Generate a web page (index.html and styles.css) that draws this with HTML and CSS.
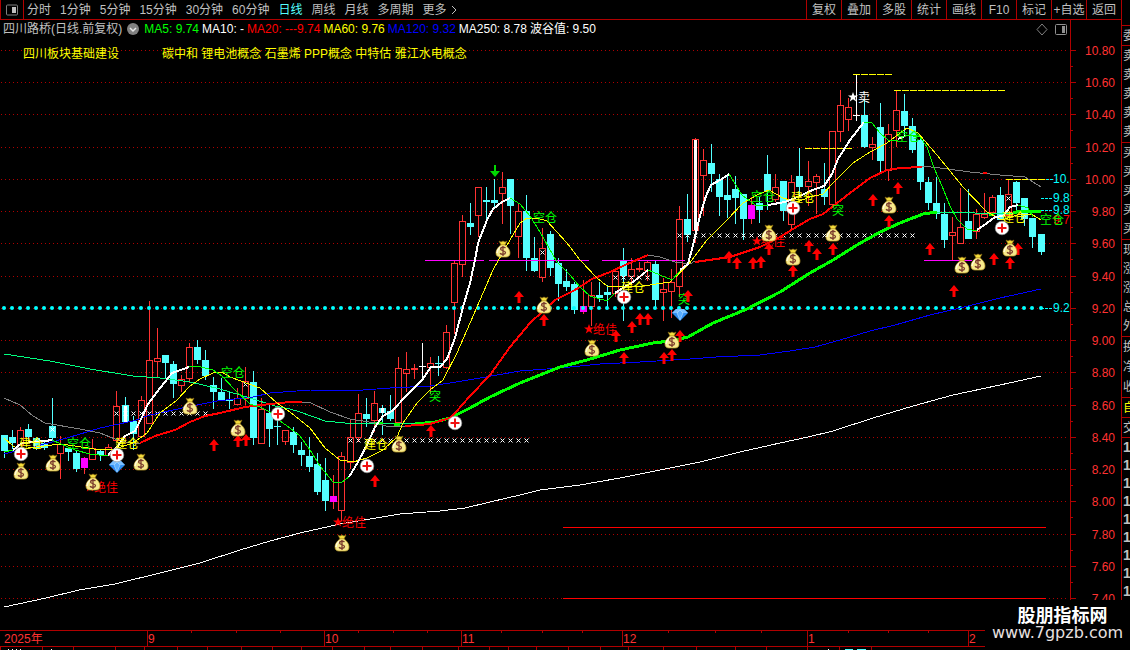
FILE: index.html
```
<!DOCTYPE html>
<html lang="zh-CN">
<head>
    <meta charset="UTF-8">
    <meta name="viewport" content="width=device-width, initial-scale=1.0">
    <title>四川路桥 日线</title>
    <link rel="stylesheet" href="styles.css">
</head>
<body>
    <div class="terminal">
        <main class="main">
            <header class="toolbar">
                <button type="button" class="panel-btn" aria-label="侧栏">
                    <svg width="14" height="12" viewBox="0 0 14 12">
                        <rect x="1.5" y="1" width="11" height="10" rx="1" fill="none" stroke="#808080"/>
                        <rect x="7" y="3" width="4" height="6" fill="#c0c0c0"/>
                    </svg>
                </button>
                <nav class="periods">
                    <button type="button">分时</button>
                    <button type="button">1分钟</button>
                    <button type="button">5分钟</button>
                    <button type="button">15分钟</button>
                    <button type="button">30分钟</button>
                    <button type="button">60分钟</button>
                    <button type="button" class="active">日线</button>
                    <button type="button">周线</button>
                    <button type="button">月线</button>
                    <button type="button">多周期</button>
                    <button type="button" class="more">更多
                        <svg width="6" height="10" viewBox="0 0 6 10"><path d="M1 1l4 4-4 4" fill="none" stroke="#c0c0c0"/></svg>
                    </button>
                </nav>
                <div class="tools">
                    <button type="button">复权</button>
                    <button type="button">叠加</button>
                    <button type="button">多股</button>
                    <button type="button">统计</button>
                    <button type="button">画线</button>
                    <button type="button">F10</button>
                    <button type="button">标记</button>
                    <button type="button">+自选</button>
                    <button type="button">返回</button>
                </div>
            </header>

            <section class="chart-wrap">
                <svg id="chart" class="chart" viewBox="0 20 1121 630"></svg>

                <div class="legend">
                    <div class="legend-row">
                        <span class="stock">四川路桥(日线.前复权)</span>
                        <svg width="12" height="12" viewBox="0 0 12 12">
                            <circle cx="6" cy="6" r="6" fill="#808080"/>
                            <path d="M3 5l3 3 3-3" fill="none" stroke="#e8e8e8" stroke-width="1.5"/>
                        </svg>
                        <span class="lime">MA5: 9.74</span>
                        <span class="white">MA10: -</span>
                        <span class="red">MA20: ---9.74</span>
                        <span class="yellow">MA60: 9.76</span>
                        <span class="blue">MA120: 9.32</span>
                        <span class="white">MA250: 8.78</span>
                        <span class="white">波谷值: 9.50</span>
                    </div>
                    <div class="tag-row">
                        <span>四川板块基础建设</span>
                        <span>碳中和 锂电池概念 石墨烯 PPP概念 中特估 雅江水电概念</span>
                    </div>
                </div>
            </section>
        </main>

        <aside class="quote">
            <div class="quote-group h20"><span>委</span></div>
            <div class="quote-group sells"><span>卖</span><span>卖</span><span>卖</span><span>卖</span><span>卖</span></div>
            <div class="quote-group sells"><span>买</span><span>买</span><span>买</span><span>买</span><span>买</span></div>
            <div class="quote-group sells"><span>现</span><span>涨</span><span>涨</span><span>总</span><span>外</span></div>
            <div class="quote-group deals"><span>换</span><span>净</span><span>收</span></div>
            <div class="quote-group h20 yellow"><span>自</span></div>
            <div class="quote-group h20"><span>交</span></div>
            <div class="quote-group ticks"><span>1</span><span>1</span><span>1</span><span>1</span><span>1</span><span>1</span><span>1</span><span>1</span><span>1</span></div>
        </aside>

        <div class="site-mark">
            <strong>股朋指标网</strong>
            <span>www.7gpzb.com</span>
        </div>
    </div>

    <script src="chart.js"></script>
</body>
</html>
```
FILE: styles.css
```
* {
    box-sizing: border-box;
}

body {
    margin: 0;
    background-color: #000;
    color: #c0c0c0;
    font-family: "Liberation Sans", "Noto Sans CJK SC", sans-serif;
    font-size: 12px;
    line-height: 18px;
    overflow: hidden;
}

button {
    margin: 0;
    padding: 0;
    border: none;
    background: none;
    color: inherit;
    font: inherit;
    white-space: nowrap;
    cursor: pointer;
}

.terminal {
    position: relative;
    display: flex;
    height: 100vh;
    overflow: hidden;
}

.main {
    flex: 1;
    min-width: 0;
}

/* toolbar */
.toolbar {
    display: flex;
    height: 20px;
    border-bottom: 1px solid #b00000;
}

.panel-btn {
    display: flex;
    align-items: center;
    justify-content: center;
    width: 24px;
    border-right: 1px solid #b00000;
    border-left: 1px solid #b00000;
}

.periods {
    display: flex;
    flex: 1;
    gap: 9px;
    padding-left: 3px;
}

.periods .active {
    color: #54ffff;
}

.more {
    display: flex;
    align-items: center;
    gap: 4px;
}

.tools {
    display: flex;
}

.tools button {
    width: 35px;
    border-left: 1px solid #b00000;
}

/* chart */
.chart-wrap {
    position: relative;
}

.chart {
    display: block;
    width: 100%;
    height: auto;
}

.chart text {
    font-size: 12px;
}

.legend {
    position: absolute;
    top: 0;
    left: 3px;
}

.legend-row {
    display: flex;
    align-items: center;
    gap: 3px;
    white-space: nowrap;
}

.legend-row svg {
    margin: 0 2px;
}

.tag-row {
    display: flex;
    gap: 43px;
    margin-top: 7px;
    padding-left: 20px;
    color: #ffff00;
    white-space: nowrap;
}

.lime { color: #00ff00; }
.white { color: #fff; }
.red { color: #ff0000; }
.yellow { color: #ffff00; }
.blue { color: #0000ff; }

/* quote panel, only its left edge is open */
.quote {
    flex: 0 0 9px;
    padding-top: 25px;
    border-left: 1px solid #b00000;
    overflow: hidden;
}

.quote-group {
    display: flex;
    flex-direction: column;
    justify-content: space-around;
    padding-left: 1px;
    border-top: 1px solid #b00000;
}

.quote-group span {
    width: 12px;
}

.h20 {
    height: 20px;
}

.sells {
    height: 97px;
}

.deals {
    height: 61px;
}

.ticks {
    font-size: 14px;
    font-weight: bold;
}

/* site name in the corner */
.site-mark {
    position: absolute;
    right: 0;
    bottom: 0;
    display: flex;
    flex-direction: column;
    align-items: center;
    width: 145px;
    height: 50px;
    padding-top: 4px;
    background-color: #000;
    color: #fff;
}

.site-mark strong {
    padding-left: 10px;
    font-family: "Noto Sans CJK SC", sans-serif;
    font-size: 18px;
    line-height: 20px;
}

.site-mark span {
    color: #e8e0e0;
    font-family: "DejaVu Sans", sans-serif;
    font-size: 16px;
    line-height: 18px;
}
```
FILE: chart.js
```
const chart = document.getElementById('chart');
const STEP = 8.035;
const UP = '#ff3232';
const DOWN = '#54ffff';
const AXIS = '#b00000';
const out = [];

const xOf = i => Math.round(4 + STEP * i);

function line(x1, y1, x2, y2, color, extra = '') {
    out.push(`<path d="M${x1} ${y1}L${x2} ${y2}" stroke="${color}" fill="none" shape-rendering="crispEdges" ${extra}/>`);
}

function rect(x, y, w, h, color) {
    out.push(`<rect x="${x}" y="${y}" width="${w}" height="${h}" fill="${color}"/>`);
}

function text(x, y, str, color) {
    out.push(`<text x="${x}" y="${y}" fill="${color}">${str}</text>`);
}

function curve(points, color, width = 1) {
    out.push(`<polyline points="${points}" fill="none" stroke="${color}" stroke-width="${width}" stroke-linejoin="round" shape-rendering="crispEdges"/>`);
}

// symbols
out.push(`<defs>
    <g id="bag">
        <path d="M-4-8l2 1 2-1 2 1 2-1-2 4h-4z" fill="#f3dc3c" stroke="#8a6a10" stroke-width=".6"/>
        <path d="M-2-4h4c3 2 5 5 5 8 0 3-2 4-4 4h-6c-2 0-4-1-4-4 0-3 2-6 5-8z" fill="#f6e98c" stroke="#c9a62c" stroke-width=".7"/>
        <path d="M-3-2c-2 2-3 4-3 6" fill="none" stroke="#fffbd8" stroke-width="1.5"/>
        <path d="M2.500-1C1-2.300-2.500-2-2.500 0S2.500 1.500 2.500 3.500-1.500 6-3 4.300M0-3v10" fill="none" stroke="#7a3b2c" stroke-width="1.3"/>
    </g>
    <g id="plus">
        <circle r="6.800" fill="#fff" stroke="#999" stroke-width=".6"/>
        <path d="M-4.500 0h9M0-4.500v9" stroke="#f01010" stroke-width="2"/>
    </g>
    <g id="gem">
        <path d="M-4-6h8l4 4-8 8-8-8z" fill="#2f8df0"/>
        <path d="M-4-6h8l4 4h-16z" fill="#7cc0ff"/>
        <path d="M-3-2L0 5l3-7-3-3z" fill="#5aaeff" stroke="#b8e0ff" stroke-width=".6"/>
    </g>
    <path id="up" d="M0-6l5 6h-3.500v6h-3v-6h-3.500z" fill="#ff0000"/>
    <path id="down" d="M0 6l5-6h-4v-6h-2v6h-4z" fill="#00d800"/>
    <path id="star" d="M0-5l1.300 3.500h3.700l-3 2.300 1.200 3.700-3.200-2.200-3.200 2.200 1.200-3.700-3-2.300h3.700z"/>
    <path id="cross" d="M-2-2l4 4M2-2l-4 4" stroke="#fff" fill="none"/>
</defs>`);

// price scale and grid
line(1070.5, 20, 1070.5, 630, AXIS);
for (let k = 0; k < 18; k++) {
    const y = Math.round(50 + 32.24 * k) + 0.5;
    line(1, y, 1067, y, AXIS, 'stroke-dasharray="1 3"');
    line(1070, y, 1076, y, AXIS);
    line(1070, y + 16, 1073, y + 16, AXIS);
    const price = (10.8 - 0.2 * k).toFixed(2);
    out.push(`<text x="1115" y="${y + 4.5}" fill="${UP}" text-anchor="end">${price}</text>`);
}

// time scale
line(0, 630.5, 1121, 630.5, AXIS);
line(0, 646.5, 1121, 646.5, AXIS);
text(4, 643, '2025年', UP);
[[147, '9'], [324, '10'], [461, '11'], [622, '12'], [807, '1'], [968, '2']].forEach(([x, m]) => {
    line(x + 0.5, 630, x + 0.5, 646, AXIS);
    text(x + 1, 643, m, UP);
});
[191, 236, 280, 358, 393, 427, 501, 542, 582, 668, 715, 761, 848, 888, 928].forEach(x => {
    line(x + 0.5, 630, x + 0.5, 633, AXIS);
});
[0, 42, 73, 115, 144, 177, 207, 241, 272, 301, 332, 364, 390, 422, 458, 489, 508, 536, 568, 600, 628, 663, 696, 735, 766, 807, 839, 871].forEach(x => {
    line(x + 0.5, 646, x + 0.5, 650, AXIS);
});
[8, 12, 16, 20, 51, 828].forEach(x => rect(x, 649, 1, 1, '#fff'));
rect(845, 649, 8, 1, DOWN);
rect(857, 649, 9, 1, DOWN);

// candles: high, top, bottom, low, type (r up, c down, m marked, w flat)
const candles = [
    [435,435,451,458,'c'], [430,437,443,449,'c'], [427,430,445,445,'r'], [424,429,437,442,'c'], [437,438,449,450,'c'],
    [442,443,448,450,'c'], [398,426,438,442,'c'], [436,444,453,479,'r'], [447,448,452,461,'c'], [450,453,469,472,'c'],
    [457,458,468,474,'m'], [439,448,459,460,'r'], [450,451,455,461,'c'], [444,447,455,455,'r'], [391,406,440,442,'r'],
    [397,405,422,422,'c'], [416,421,434,450,'c'], [396,400,436,438,'r'], [301,360,423,423,'r'], [328,358,361,378,'r'],
    [355,355,363,378,'c'], [361,364,384,398,'c'], [375,379,385,392,'r'], [343,347,378,383,'r'], [340,347,360,364,'c'],
    [350,360,376,380,'c'], [377,385,392,409,'c'], [378,392,400,401,'c'], [392,400,401,409,'c'], [388,398,404,405,'r'],
    [367,381,398,405,'r'], [371,382,438,445,'c'], [398,409,443,443,'r'], [405,413,429,447,'c'], [418,426,427,445,'c'],
    [430,430,441,445,'r'], [427,432,445,453,'c'], [442,450,455,466,'c'], [437,456,467,472,'c'], [453,464,492,495,'c'],
    [458,480,501,511,'c'], [475,496,502,509,'m'], [452,456,510,521,'r'], [420,437,462,469,'r'], [394,413,437,442,'r'],
    [398,414,419,427,'c'], [391,403,420,432,'r'], [405,408,413,435,'c'], [395,411,419,421,'c'], [357,368,422,422,'r'],
    [352,369,373,392,'r'], [364,368,370,379,'r'], [343,366,367,378,'w'], [357,363,367,394,'r'], [356,363,364,376,'c'],
    [325,332,367,369,'r'], [261,263,302,334,'r'], [215,221,264,277,'r'], [203,223,227,235,'c'], [187,187,215,237,'r'],
    [187,200,202,220,'c'], [179,200,203,208,'c'], [172,187,193,224,'r'], [179,179,206,234,'c'], [204,211,236,258,'r'],
    [195,211,258,271,'c'], [237,258,271,272,'c'], [228,248,277,282,'r'], [231,234,268,276,'c'], [258,263,284,301,'c'],
    [269,281,287,291,'c'], [282,284,310,314,'c'], [280,306,312,314,'m'], [282,295,306,326,'r'], [282,295,298,302,'c'],
    [285,292,295,307,'c'], [271,271,293,297,'r'], [248,261,276,321,'c'], [258,269,276,282,'r'], [262,268,270,272,'r'],
    [260,262,270,281,'r'], [261,264,300,307,'c'], [278,289,292,321,'r'], [269,282,291,318,'r'], [206,219,286,297,'r'],
    [194,219,235,242,'c'], [138,139,230,243,'r'], [149,160,175,216,'r'], [144,163,174,192,'c'], [174,179,197,216,'c'],
    [176,195,200,218,'c'], [176,189,198,224,'c'], [194,194,219,240,'c'], [197,205,219,224,'m'], [197,203,210,223,'c'],
    [155,174,191,210,'c'], [174,187,199,202,'r'], [181,181,211,221,'c'], [175,182,224,230,'r'], [148,176,187,195,'c'],
    [161,181,186,206,'r'], [174,176,182,214,'r'], [163,189,197,205,'c'], [131,131,204,208,'r'], [90,105,131,142,'r'],
    [98,107,119,131,'r'], [74,115,116,121,'w'], [100,115,147,148,'c'], [137,144,147,160,'r'], [103,127,161,173,'c'],
    [124,134,170,181,'r'], [90,110,130,147,'r'], [94,111,126,135,'c'], [118,126,150,153,'c'], [139,140,182,190,'c'],
    [177,182,203,210,'c'], [177,203,214,219,'c'], [203,214,240,248,'c'], [217,232,235,260,'r'], [188,227,243,243,'r'],
    [189,221,239,239,'c'], [209,214,231,239,'r'], [193,214,217,219,'r'], [195,197,212,214,'r'], [187,195,220,220,'c'],
    [179,194,215,218,'r'], [181,182,203,210,'c'], [198,198,219,226,'c'], [218,218,237,248,'c'], [234,234,252,255,'c']
];

candles.forEach(([high, top, bottom, low, type], i) => {
    const x = xOf(i);
    const h = Math.max(bottom - top, 1);
    if (type === 'r') {
        rect(x, high, 1, top - high, UP);
        rect(x, bottom, 1, low - bottom, UP);
        if (h < 3) {
            rect(x - 3, top, 7, h, UP);
        } else {
            out.push(`<rect x="${x - 2.5}" y="${top + 0.5}" width="6" height="${h}" fill="none" stroke="${UP}"/>`);
        }
    } else {
        const wick = type === 'm' ? UP : type === 'w' ? '#fff' : DOWN;
        const body = type === 'm' ? '#ff00ff' : wick;
        rect(x, high, 1, low - high, wick);
        rect(x - 3, top, 7, h, body);
    }
});
rect(xOf(15) - 1, 406, 3, 16, '#fff');
rect(xOf(47) - 1, 408, 3, 5, '#fff');
rect(xOf(86) - 1, 140, 3, 90, '#fff');

// key levels
for (let i = 0; i < 130; i++) {
    out.push(`<circle cx="${xOf(i)}" cy="308" r="2" fill="#00ffff"/>`);
}
[[425, 484], [489, 589], [602, 685], [924, 972]].forEach(([a, b]) => line(a, 260.5, b, 260.5, '#ff00ff'));
[[853, 892, 74], [894, 1005, 90], [805, 852, 148], [1006, 1046, 179]].forEach(([a, b, y]) => {
    line(a, y + 0.5, b, y + 0.5, '#ffff00', 'stroke-dasharray="7 1"');
});
line(563, 527.5, 1046, 527.5, '#ff0000');
line(563, 598.5, 1046, 598.5, '#ff0000');

function crosses(from, to, y) {
    for (let i = from; i <= to; i++) {
        out.push(`<use href="#cross" x="${xOf(i) + 0.5}" y="${y + 0.5}"/>`);
    }
}
crosses(14, 25, 413);
crosses(6, 6, 429);
crosses(30, 30, 384);
crosses(43, 65, 440);
crosses(67, 67, 252);
crosses(76, 80, 277);
crosses(84, 113, 235);
crosses(125, 125, 198);

// MA250
curve('4,607 46,598 79,590 115,584 160,573 200,563 240,550 270,541 300,533 340,524 400,514 440,511 465,508 490,502 520,495 540,490 580,485 620,478 660,470 700,462 740,452 780,443 808,437 833,431 873,418 913,406 953,395 1000,385 1041,376', '#fff');
// MA120
curve('4,454 33,447 67,438 100,428 133,421 150,415 187,407 217,401 253,397 270,393 310,390 350,391 390,388 430,386 450,383 480,378 520,371 560,368 600,364 640,362 690,359 716,357 760,355 790,351 815,347 840,340 870,331 895,325 930,315 960,308 1000,298 1041,289', '#0000ff');
// MA60
curve('4,354 50,361 90,369 133,376 160,378 190,382 220,389 250,398 275,406 290,409 300,412 325,421 345,423 375,423 415,424', '#00ff80');
curve('375,423 383,423', '#00ff00', 3);
curve('394,424 400,424', '#00ff00', 3);
curve('415,424 435,422 450,418 470,408 490,397 520,383 560,367 587,360 620,350 653,343 670,341 688,337 713,323 747,309 780,292 810,273 833,260 857,245 880,232 900,223 923,214 937,212', '#00ff00', 3);
curve('937,212 960,212 990,214 1015,213', '#00ff80');
curve('989,214 994,214', '#00ff00', 3);
curve('1013,213 1020,211 1041,211', '#00ff00', 3);
// MA20
curve('4,398 20,405 33,416 45,423 80,429 100,433 115,439 130,443 140,443', '#808080');
curve('140,443 155,436 175,430 190,422 205,416 220,413 245,407 270,404 290,402 302,402', '#ff0000', 2);
curve('302,402 311,403 330,412 350,419 375,423 390,427 405,426', '#808080');
curve('405,426 430,424 450,418 455,413 470,396 490,375 510,347 530,323 555,300 575,290 592,279 610,272 625,265 648,255', '#ff0000', 2);
curve('648,255 660,257 675,262 690,264 695,261', '#808080');
curve('695,262 730,257 760,247 780,237 793,229 810,219 823,214 850,193 870,178 887,170 900,168 922,167', '#ff0000', 2);
curve('922,166 940,168 970,172 1000,175 1025,177 1041,187', '#808080');
curve('983,173 987,173', '#ff0000', 2);
// MA10
curve('4,438 13,446 20,449 60,444 75,446 100,450 115,449 133,443 147,433 160,413 177,400 190,386 200,379 213,373 222,372 230,377 260,388 277,403 290,412 310,428 325,448 340,460 353,462 367,458 383,450 397,437 403,423 417,403 430,390 443,380 457,353 480,300 493,270 503,252 520,223 527,218 537,218 547,221 567,243 580,260 597,278 607,286 620,287 643,286 670,282 688,265 707,240 727,220 743,203 757,195 769,190 783,198 797,202 810,197 823,194 833,183 853,163 870,152 887,143 907,128 918,133 937,155 963,187 987,212 1002,220 1020,214 1033,215 1041,220', '#ffff00');
// MA5, white while rising
curve('4,452 13,450', '#00ff00');
curve('13,450 22,443 45,441 52,440', '#fff', 2);
curve('52,440 75,450 90,454 108,456', '#00ff00');
curve('108,455 117,447 125,436 135,431 142,417 148,404 157,392 172,373 189,367', '#fff', 2);
curve('189,367 197,366 213,370 222,376 235,390 250,404 260,407 272,413 280,421 290,428 300,436 310,450 320,466 333,482 341,483 349,477', '#00ff00');
curve('349,477 358,462 368,443 375,427 383,416 392,411 407,395 422,380 431,367 440,367 447,359 455,338 463,307 470,283 475,260 478,243 487,220 493,209 502,202 510,198', '#fff', 2);
curve('510,198 520,204 530,216 540,232 557,262 570,275 580,287 590,296 607,301 615,293', '#00ff00');
curve('615,293 623,288 633,282 648,270', '#fff', 2);
curve('648,270 672,280 680,271', '#00ff00');
curve('680,270 688,264 693,245 700,216 706,196 711,185 722,179 729,174', '#fff', 2);
curve('729,174 742,195 755,205 768,206', '#00ff00');
curve('768,205 785,202 800,196 810,191 824,186 832,174 838,159 850,140 864,122', '#fff', 2);
curve('864,122 872,123 880,133 888,140 898,140', '#00ff00');
curve('898,139 905,136', '#fff', 2);
curve('905,135 920,137 927,147 934,168 942,186 950,206 957,219 967,229 977,231', '#00ff00');
curve('977,230 987,223 995,217 1003,216 1010,207 1018,205', '#fff', 2);
curve('1018,205 1028,208 1033,217', '#00ff00');

// signals
[[67, 443], [221, 372], [533, 217], [751, 196], [896, 136]].forEach(([x, y]) => text(x, y + 5, '空仓', '#00ff00'));
[[19, 443], [115, 443], [364, 444], [621, 287], [791, 197], [1002, 217]].forEach(([x, y]) => text(x, y + 5, '建仓', '#ffff00'));
[[429, 396], [678, 299], [832, 210]].forEach(([x, y]) => text(x, y + 5, '突', '#00ff00'));
[[94, 487], [342, 522], [593, 329], [761, 241]].forEach(([x, y]) => {
    out.push(`<use href="#star" x="${x - 4}" y="${y}" fill="#ff0000"/>`);
    text(x, y + 5, '绝佳', '#ff0000');
});
out.push('<use href="#star" x="853" y="97" fill="#fff"/>');
text(858, 102, '卖', '#fff');

function place(id, points) {
    points.forEach(([x, y]) => out.push(`<use href="#${id}" x="${x}" y="${y}"/>`));
}
place('up', [
    [214, 445], [238, 441], [246, 440], [375, 481], [431, 431], [519, 297], [544, 320], [616, 336], [624, 358], [632, 327],
    [640, 319], [648, 319], [664, 358], [672, 355], [680, 336], [688, 296], [729, 257], [737, 263], [753, 263], [761, 262],
    [769, 249], [793, 271], [809, 246], [817, 254], [833, 249], [873, 200], [889, 221], [898, 188], [930, 249], [954, 291],
    [994, 259], [1018, 249], [1010, 263]
]);
place('down', [[495, 171]]);
place('gem', [[117, 467], [680, 315]]);
place('bag', [
    [21, 471], [53, 463], [93, 482], [141, 462], [190, 406], [238, 428], [399, 444], [342, 543], [544, 305], [503, 249],
    [592, 348], [672, 340], [769, 233], [793, 257], [833, 233], [889, 205], [962, 265], [978, 262], [1010, 248]
]);
place('plus', [[21, 454], [117, 455], [278, 414], [455, 423], [367, 466], [624, 297], [793, 208], [1002, 228]]);

// price tags next to the last bar
[[1046, 179, '10.'], [1041, 198, '9.8'], [1041, 210, '9.8'], [1041, 308, '9.2']].forEach(([x, y, s]) => {
    line(x, y + 0.5, 1053, y + 0.5, '#00ffff', 'stroke-dasharray="3 1"');
    text(1053, y + 4, s, '#00ffff');
});
text(1053, 224, '9.7', '#ff0000');
text(1040, 224, '空仓', '#00ff00');

// chart corner buttons
out.push('<path d="M1042 24l5 5.500-5 5.500-5-5.500z" fill="none" stroke="#808080"/>');
out.push('<rect x="1055.500" y="24.500" width="11" height="10" rx="1" fill="none" stroke="#909090"/>');
rect(1062, 26, 3, 7, '#909090');

chart.innerHTML = out.join('');
```
